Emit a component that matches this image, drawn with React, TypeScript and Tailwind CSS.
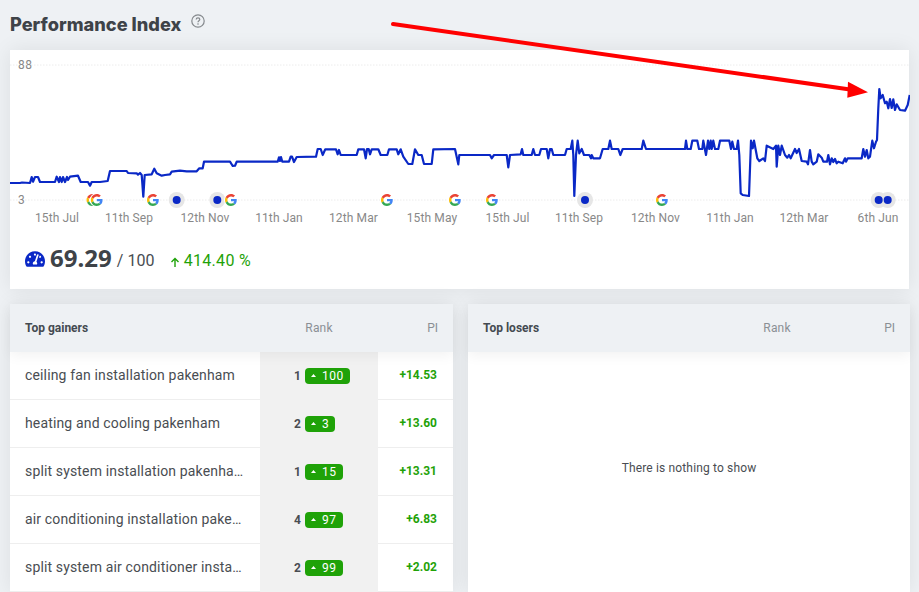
import React from "react";
import { FaTachometerAlt } from "react-icons/fa";

const LINE = `10,183 20,183 22,182.5 30,183 31.7,177 33,181.7 35,177 38,177 40,182 55,182 56.7,176.7 59,182 60,177 61.7,182 63,177 65,182 67,177 68,180 70,176.7 78,175.7 80.7,182 88,182 90,185.7 91.7,182 100,182 107.7,181 110,171 126.7,171 128,173 136.7,173.3 138,174.7 140,173 141.7,175 143.3,196.7 144.7,175 151.7,174.3 154.3,168.7 156.7,173.3 161.7,175.7 165,175 170,174.3 171.7,171.7 180,170.7 186.7,171.3 196.7,171.3 199.3,168.3 202.7,168.3 204,161.7 230,161.7 232.7,166 235,165.7 236.7,161.7 277.7,161.7 279,157.3 280,161 281,157 282.3,161.7 289,161.7 290.7,156.7 292,156.7 294,162 296.7,157 316,156.7 317.7,149 320.7,149 322.7,155 325.3,149.3 336,149.3 337.7,154.3 339,150 340.7,155 356.7,155 358.3,149.3 364,149.3 365.7,158.3 367,149 368.7,149 370,154.3 371.7,149.3 378.3,149.3 380.7,155 387.3,155 389,149.3 396.7,149.3 398.3,154.3 400.7,149.3 403.3,156.7 408.3,164 412.3,164 415,149.3 418.3,155 421.7,155 424,164 431.7,164 433.3,149.3 455,149 458.3,164.3 459.3,155 490,155 491.7,158.3 494,155 506.7,155 508.3,167.3 510,155 520.7,154.3 522,149 523.3,155 531.7,155 533.3,149 535,155 539.3,155 541,149 546.7,149 548.3,158.3 550,149 551.7,149 553.3,155 565,155 566.7,149 570.7,149 572.3,140.7 573.3,155 574.3,196 576,155 577.7,140.7 579.3,153.3 581.7,149 584,155 589.3,155 591,158.3 591.7,155 593.3,158.3 600,158.3 602.7,149 608.3,149 610,140.7 611.7,149 618.3,149 620.3,155 622.7,149 641.7,149 643.3,140.7 646,149 685,149 686,140.7 687.3,149 690.7,149 692.3,140.7 697.3,140.7 699,149 702.3,149 703.3,140.7 706,155 708,140.7 709.3,149 710.7,140.7 711.7,149 713.3,140.7 715,149 718.3,149 720,140.7 729.3,140.7 731,149 732.3,141.7 734,149 736.7,149 738,140.7 739.3,155 740.7,193.3 742.7,195 749,196 751,140.7 752.7,148.3 754,140.7 757.3,158.3 759.3,161 763.3,158.3 765,161 766.7,145.7 773.3,149 776,145.7 776.7,166.7 778.3,145.7 780,155 781.7,145.7 785,155 787.3,157.7 789,155 790.7,158.3 795,149 796.7,153 799,149 801.7,161 806.7,161.7 808,164.3 810,150 811.7,161.7 813.3,164.3 816.7,161.7 818.3,154.3 821.7,157.7 823.3,161.7 827,161.7 828.3,155 830,164.3 831.7,158.3 833.3,162 835,159 836.7,163.3 838.3,161.7 842.7,163.3 845,158.3 846,161.7 847.7,158.3 850,158.3 861.7,158.3 863.3,149 865,156.7 866.7,150 868.3,158.3 870,156.7 872.3,140.7 874,148.3 876,141.7 877,140 878.3,108.3 879.3,89 880.7,98.3 882.7,95 885,103.3 886.7,101.7 888.3,108.3 890,99 891.7,108 893.3,99.3 895,110 896.7,104.3 900,110 905,110.7 907.7,105 909.7,95`;

const TICKS: [string, number][] = [
  ["15th Jul", 57], ["11th Sep", 129], ["12th Nov", 205], ["11th Jan", 279], ["12th Mar", 353.5], ["15th May", 432],
  ["15th Jul", 507.5], ["11th Sep", 579], ["12th Nov", 655.5], ["11th Jan", 730], ["12th Mar", 804], ["6th Jun", 878],
];

function G({ x, y = 200 }: { x: number; y?: number }) {
  return (
    <g transform={`translate(${x - 6} ${y - 6}) scale(0.25)`}>
      <circle cx="24" cy="24" r="28" fill="#fff" />
      <path fill="#EA4335" d="M24 9.5c3.54 0 6.71 1.22 9.21 3.6l6.85-6.85C35.9 2.38 30.47 0 24 0 14.62 0 6.51 5.38 2.56 13.22l7.98 6.19C12.43 13.72 17.74 9.5 24 9.5z" />
      <path fill="#4285F4" d="M46.98 24.55c0-1.57-.15-3.09-.38-4.55H24v9.02h12.94c-.58 2.96-2.26 5.48-4.78 7.18l7.73 6c4.51-4.18 7.09-10.36 7.09-17.65z" />
      <path fill="#FBBC05" d="M10.53 28.59c-.5-1.45-.78-2.99-.78-4.59s.27-3.14.78-4.59l-7.98-6.19C.92 16.46 0 20.12 0 24c0 3.88.92 7.54 2.56 10.78l7.97-6.19z" />
      <path fill="#34A853" d="M24 48c6.48 0 11.93-2.13 15.89-5.81l-7.73-6c-2.15 1.45-4.92 2.3-8.16 2.3-6.26 0-11.57-4.22-13.47-9.91l-7.98 6.19C6.51 42.62 14.62 48 24 48z" />
    </g>
  );
}

function Halo({ x }: { x: number }) {
  return <circle cx={x} cy={200} r={8} fill="#e6e6e6" />;
}
function Core({ x }: { x: number }) {
  return <circle cx={x} cy={200} r={4} fill="#0a28c6" />;
}

function Chart() {
  return (
    <svg viewBox="10 50 900 178" width={900} height={178} className="block" style={{ fontFamily: "Roboto, sans-serif" }}>
      <line x1="10" x2="910" y1="65" y2="65" stroke="#ececec" strokeWidth="1" strokeDasharray="1.5 1.5" />
      <line x1="10" x2="910" y1="200" y2="200" stroke="#ececec" strokeWidth="1" strokeDasharray="1.5 1.5" />
      <text x="18" y="69" fontSize="12" fill="#888" letterSpacing="0.5">88</text>
      <text x="18" y="204" fontSize="12" fill="#888">3</text>
      <polyline points={LINE} fill="none" stroke="#0a28c6" strokeWidth="2.2" strokeLinejoin="round" />
      <G x={92.5} />
      <G x={96.8} />
      <G x={153} />
      <Halo x={176.7} />
      <Core x={176.7} />
      <Halo x={217.3} />
      <Core x={217.3} />
      <G x={231} />
      <G x={387} />
      <G x={455} />
      <G x={492} />
      <Halo x={585} />
      <Core x={585} />
      <G x={662} />
      <Halo x={878.7} />
      <Halo x={887.7} />
      <Core x={878.7} />
      <Core x={887.7} />
      {TICKS.map(([t, x], i) => (
        <text key={i} x={x} y="222" fontSize="12" fill="#888" textAnchor="middle" letterSpacing="0.12">{t}</text>
      ))}
    </svg>
  );
}

const ROWS = [
  ["ceiling fan installation pakenham", "1", "100", "+14.53"],
  ["heating and cooling pakenham", "2", "3", "+13.60"],
  ["split system installation pakenham", "1", "15", "+13.31"],
  ["air conditioning installation pakenham", "4", "97", "+6.83"],
  ["split system air conditioner installation", "2", "99", "+2.02"],
];

function Header({ title }: { title: string }) {
  return (
    <div className="relative z-10 flex h-12 items-center bg-[#eef1f4] text-xs shadow-[0_4px_12px_rgba(0,0,0,0.05)]">
      <div className="w-[250px] pl-[15px] font-bold text-[#444a50]">{title}</div>
      <div className="w-[118px] text-center tracking-[0.2px] text-[#8a8f94]">Rank</div>
      <div className="flex-1 pr-[15px] text-right text-[#8a8f94]">PI</div>
    </div>
  );
}

function Row({ name, rank, delta, pi }: { name: string; rank: string; delta: string; pi: string }) {
  return (
    <div className="flex h-12">
      <div className="flex w-[250px] items-center border-b border-[#eeeeee] pb-[2px] pl-[15px] pr-[15px] text-sm tracking-[0.15px] text-[#494d52]">
        <span className="truncate">{name}</span>
      </div>
      <div className="flex w-[118px] items-center bg-[#f1f1f1] pb-[1px] pl-[34px]">
        <span className="w-[11px] text-xs font-bold text-[#494d52]">{rank}</span>
        <span className="flex h-4 items-center gap-[6px] rounded-[4px] bg-[#1fa208] pl-[6px] pr-[6px] text-xs leading-none tracking-[0.5px] text-white">
          <svg width="5" height="3" viewBox="0 0 5 3"><path d="M2.500 0L5 3H0z" fill="#fff" /></svg>
          {delta}
        </span>
      </div>
      <div className="flex flex-1 items-center justify-end border-b border-[#eeeeee] pb-[1px] pr-[16px] text-xs font-bold text-[#1fa208]">
        {pi}
      </div>
    </div>
  );
}

export default function App() {
  return (
    <div className="relative h-[592px] w-[919px] overflow-hidden bg-[#eef1f4] px-[10px]" style={{ fontFamily: "Roboto, sans-serif" }}>
      <div className="flex h-[50px] items-start pt-[13px]">
        <h1 className="text-[18.2px] font-extrabold leading-[22px] text-[#3e4348]" style={{ fontFamily: "Inter, sans-serif" }}>
          Performance Index
        </h1>
        <svg className="ml-[10px] mt-[1px]" width="14" height="14" viewBox="0 0 14 14" fill="none">
          <circle cx="7" cy="7" r="6.2" stroke="#85898d" strokeWidth="1.2" />
          <path d="M5.200 5.600C5.200 4.500 6 3.900 7 3.900s1.800.6 1.800 1.600c0 1.200-1.800 1.400-1.800 2.800" stroke="#85898d" strokeWidth="1.2" />
          <circle cx="7" cy="10" r="0.8" fill="#85898d" />
        </svg>
      </div>

      <div className="h-[239px] bg-white shadow-[0_0_20px_rgba(0,0,0,0.08)]">
        <Chart />
        <div className="flex items-center pl-[15px] pt-[16px] text-[#3e4348]">
          <FaTachometerAlt className="text-[20px] text-[#0a28c6]" />
          <span className="mb-[2px] ml-[5px] text-2xl font-bold leading-7" style={{ fontFamily: "'Noto Sans', sans-serif" }}>69.29</span>
          <span className="ml-[5px] mt-[3px] text-base tracking-[0.1px] text-[#494d52]">/ 100</span>
          <svg className="ml-[15px] mt-[6px]" width="10" height="10" viewBox="0 0 10 10" fill="none">
            <path d="M5 10V1.500M1.500 5L5 1.500 8.500 5" stroke="#1fa208" strokeWidth="1.4" />
          </svg>
          <span className="ml-[4px] mt-[4px] text-base tracking-[0.3px] text-[#1fa208]">414.40 %</span>
        </div>
      </div>

      <div className="mt-[15px] grid grid-cols-[443px_442px] gap-[15px]">
        <div className="h-[288px] bg-white shadow-[0_0_20px_rgba(0,0,0,0.08)]">
          <Header title="Top gainers" />
          {ROWS.map((r) => (
            <Row key={r[0]} name={r[0]} rank={r[1]} delta={r[2]} pi={r[3]} />
          ))}
        </div>
        <div className="h-[288px] bg-white shadow-[0_0_20px_rgba(0,0,0,0.08)]">
          <Header title="Top losers" />
          <div className="flex h-[232px] items-center justify-center text-xs tracking-[0.15px] text-[#494d52]">There is nothing to show</div>
        </div>
      </div>

      <svg className="pointer-events-none absolute inset-0 z-20" width="919" height="592" viewBox="0 0 919 592">
        <line x1="393" y1="24" x2="850" y2="89.500" stroke="#ff0000" strokeWidth="4" strokeLinecap="round" />
        <polygon points="848,81.700 868,92.300 847.300,97.700" fill="#ff0000" />
      </svg>
    </div>
  );
}
